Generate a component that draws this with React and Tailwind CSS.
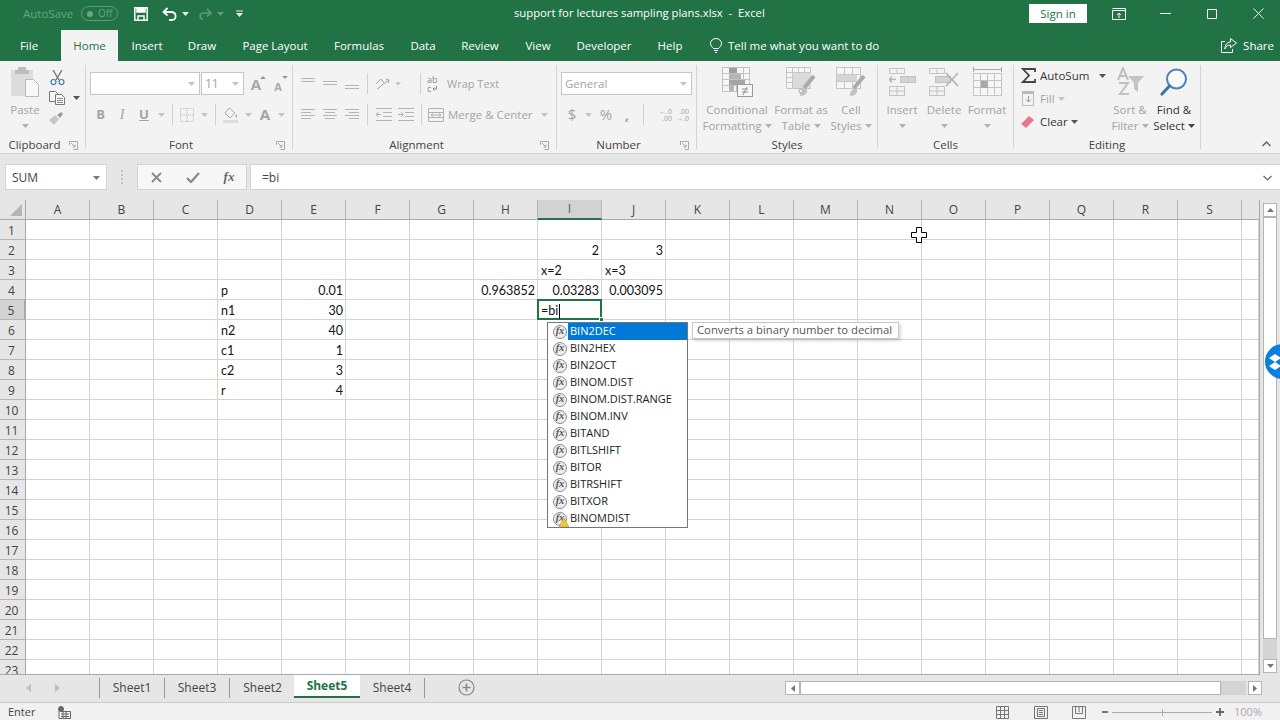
const UI = "font-['Open_Sans',sans-serif]";
const COLS = ["A", "B", "C", "D", "E", "F", "G", "H", "I", "J", "K", "L", "M", "N", "O", "P", "Q", "R", "S"];
const ROWS = Array.from({ length: 23 }, (_, i) => i + 1);
const TABS = [
  ["File", "w-[61px] pr-[3px]"],
  ["Home", "w-[57px]"],
  ["Insert", "w-[58px]"],
  ["Draw", "w-[52px]"],
  ["Page Layout", "w-[94px]"],
  ["Formulas", "w-[74px]"],
  ["Data", "w-[54px]"],
  ["Review", "w-[60px]"],
  ["View", "w-[56px]"],
  ["Developer", "w-[76px]"],
  ["Help", "w-[56px]"],
];
const CELLS = {
  I2: ["2", "r"],
  J2: ["3", "r"],
  I3: ["x=2"],
  J3: ["x=3"],
  D4: ["p"],
  E4: ["0.01", "r"],
  H4: ["0.963852", "r"],
  I4: ["0.03283", "r"],
  J4: ["0.003095", "r"],
  D5: ["n1"],
  E5: ["30", "r"],
  D6: ["n2"],
  E6: ["40", "r"],
  D7: ["c1"],
  E7: ["1", "r"],
  D8: ["c2"],
  E8: ["3", "r"],
  D9: ["r"],
  E9: ["4", "r"],
};
const FUNCS = ["BIN2DEC", "BIN2HEX", "BIN2OCT", "BINOM.DIST", "BINOM.DIST.RANGE", "BINOM.INV", "BITAND", "BITLSHIFT", "BITOR", "BITRSHIFT", "BITXOR", "BINOMDIST"];

const G = "#b4b4b4";

function Caret({ color = "#a6a6a6", className = "" }) {
  return (
    <svg width="7" height="4" viewBox="0 0 7 4" className={className}>
      <path d="M0 0h7L3.500 4z" fill={color} />
    </svg>
  );
}

function Slot({ w, children, className = "" }) {
  return <div className={`flex h-full shrink-0 items-center justify-center ${w} ${className}`}>{children}</div>;
}

function Sep() {
  return <div className="h-[21px] w-px bg-[#d0d0d0]" />;
}

function Launcher() {
  return (
    <svg width="9" height="9" viewBox="0 0 9 9" fill="none" stroke="#a8a8a8">
      <path d="M.5 4V.5H8.500V8.500H4.500" />
      <path d="M2 2l4 4M6 3.500V6H3.500" />
    </svg>
  );
}

function Group({ w, label, launcher, children }) {
  return (
    <>
      <div className={`flex h-full shrink-0 flex-col ${w}`}>
        <div className="h-[76px] shrink-0">{children}</div>
        <div className="flex h-[16px] items-center">
          <div className="flex-1 text-center text-[11.5px] text-[#444]">{label}</div>
          {launcher && (
            <div className="flex w-[16px] justify-start">
              <Launcher />
            </div>
          )}
        </div>
      </div>
      <div className="mb-[4px] mt-[4px] w-px shrink-0 bg-[#d5d5d5]" />
    </>
  );
}

function BigBtn({ w, icon, l1, l2, caret, dark, className = "" }) {
  const c = dark ? "text-[#333]" : "text-[#a3a3a3]";
  return (
    <div className={`flex shrink-0 flex-col items-center whitespace-nowrap text-[11.5px] leading-[16px] ${c} ${w} ${className}`}>
      <div className="flex h-[41px] items-center">{icon}</div>
      <div>{l1}</div>
      <div className="flex h-[16px] items-center gap-[3px]">
        {l2}
        {caret && <Caret color={dark ? "#444" : "#b0b0b0"} />}
      </div>
    </div>
  );
}

function Lines({ kind }) {
  const sets = {
    left: [[0, 14], [0, 10], [0, 14], [0, 10]],
    center: [[0, 14], [2, 12], [0, 14], [2, 12]],
    right: [[0, 14], [4, 14], [0, 14], [4, 14]],
  };
  return (
    <svg width="14" height="11" viewBox="0 0 14 11" stroke={G}>
      {sets[kind].map(([a, b], i) => (
        <path key={i} d={`M${a} ${i * 3 + 0.5}H${b}`} />
      ))}
    </svg>
  );
}

function VAlign({ at }) {
  return (
    <svg width="14" height="14" viewBox="0 0 14 14" stroke={G}>
      {[0, 3].map((d) => (
        <path key={d} d={`M0 ${at + d + 0.5}H14`} />
      ))}
    </svg>
  );
}

function Indent({ flip }) {
  return (
    <svg width="16" height="13" viewBox="0 0 16 13" fill="none" stroke={G}>
      <path d="M0 .5H16M7 4.500H16M7 8.500H16M0 12.500H16" />
      <path d={flip ? "M0 6.500H5M3 4l2.500 2.500L3 9" : "M5 6.500H0M2.500 4L0 6.500 2.500 9"} stroke="#9bb4cc" />
    </svg>
  );
}

function PasteIcon() {
  return (
    <svg width="30" height="32" viewBox="0 0 30 32">
      <rect x="1" y="4" width="22" height="26" fill="#dcdcdc" />
      <rect x="8" y="1" width="8" height="5" fill="#bdbdbd" />
      <rect x="5" y="4" width="14" height="4" fill="#bdbdbd" />
      <path d="M15.500 13.500h8l5 5v12h-13z" fill="#f8f8f8" stroke="#b9b9b9" />
    </svg>
  );
}

function Scissors() {
  return (
    <svg width="15" height="15" viewBox="0 0 15 15" fill="none">
      <path d="M3 0l6 10M12 0L6 10" stroke="#777" strokeWidth="1.400" />
      <circle cx="3.500" cy="12" r="2.500" stroke="#3f7ab8" strokeWidth="1.200" />
      <circle cx="11.500" cy="12" r="2.500" stroke="#3f7ab8" strokeWidth="1.200" />
    </svg>
  );
}

function CopyIcon() {
  return (
    <svg width="16" height="14" viewBox="0 0 16 14" fill="#f5f5f5" stroke="#777">
      <path d="M.5.500h6l2 2v8h-8z" />
      <path d="M6.500 3.500h6l3 3v7h-9z" />
      <path d="M8 7.500h6M8 9.500h6M8 11.500h6" strokeWidth=".8" />
    </svg>
  );
}

function BrushIcon() {
  return (
    <svg width="16" height="14" viewBox="0 0 16 14">
      <path d="M0 9l6-5 4 4-5 6z" fill="#c8c8c8" />
      <path d="M8 4l4-3 2 2-3 4z" fill="#9d9d9d" />
    </svg>
  );
}

function GrowA({ small }) {
  return (
    <div className="relative flex h-[16px] w-[16px] items-end justify-center">
      <span className={`font-bold leading-none text-[#a8a8a8] ${small ? "text-[11px]" : "text-[15px]"}`}>A</span>
      <svg width="6" height="3" viewBox="0 0 6 3" className="absolute right-[-2px] top-0">
        <path d={small ? "M0 0h6L3 3z" : "M0 3h6L3 0z"} fill="#999" />
      </svg>
    </div>
  );
}

function BordersIcon() {
  return (
    <svg width="14" height="14" viewBox="0 0 14 14" fill="none" stroke="#bbb" strokeDasharray="1 1">
      <rect x=".5" y=".5" width="13" height="13" />
      <path d="M7 0v14M0 7h14" />
    </svg>
  );
}

function FillIcon() {
  return (
    <svg width="16" height="16" viewBox="0 0 16 16">
      <path d="M6 1l6 5-5 5-5-5z" fill="#f4f4f4" stroke="#aaa" />
      <path d="M13 7c1.500 2 1.500 3 .5 3.500S12 9 13 7z" fill="#aaa" />
      <rect y="13" width="15" height="3" fill="#dddddd" />
    </svg>
  );
}

function CondIcon() {
  return (
    <svg width="31" height="30" viewBox="0 0 31 30" fill="none" stroke="#c2c2c2">
      <rect x=".5" y=".5" width="27" height="24" fill="#f6f6f6" />
      <path d="M0 6.500h28M0 12.500h28M0 18.500h28M7.500 0v25M14.500 0v25M21.500 0v25" />
      <rect x="7" y="1" width="8" height="5" fill="#9d9d9d" stroke="none" />
      <rect x="7" y="7" width="12" height="5" fill="#b5b5b5" stroke="none" />
      <rect x="7" y="13" width="16" height="5" fill="#a5a5a5" stroke="none" />
      <rect x="7" y="19" width="5" height="5" fill="#b5b5b5" stroke="none" />
      <rect x="15.500" y="17.500" width="15" height="12" fill="#f7f7f7" stroke="#9b9b9b" />
      <path d="M20 22h6M20 25h6M25 20l-4 8" stroke="#8f8f8f" />
    </svg>
  );
}

function TableIcon() {
  return (
    <svg width="30" height="29" viewBox="0 0 30 29" fill="none" stroke="#c6c6c6">
      <rect x=".5" y=".5" width="24" height="21" fill="#f6f6f6" />
      <path d="M0 5.500h25M0 10.500h25M0 15.500h25M6.500 0v22M12.500 0v22M18.500 0v22" />
      <rect x="7" y="6" width="18" height="15" fill="#dadada" stroke="none" />
      <path d="M28 9L18 21" stroke="#aaa" strokeWidth="4" />
      <path d="M14 29c0-6 3-8 7-7 1 4-2 7-7 7z" fill="#c2c2c2" stroke="none" />
      <circle cx="15" cy="24" r="2" fill="#f3f3f3" stroke="#aaa" />
    </svg>
  );
}

function CellStylesIcon() {
  return (
    <svg width="30" height="29" viewBox="0 0 30 29" fill="none" stroke="#c6c6c6">
      <rect x=".5" y=".5" width="24" height="21" fill="#f6f6f6" />
      <path d="M0 7.500h25M0 14.500h25M8.500 0v22M16.500 0v22" />
      <rect x="1" y="8" width="20" height="6" fill="#d6d6d6" stroke="none" />
      <path d="M28 9L18 21" stroke="#aaa" strokeWidth="4" />
      <path d="M14 29c0-6 3-8 7-7 1 4-2 7-7 7z" fill="#c2c2c2" stroke="none" />
    </svg>
  );
}

function InsertIcon() {
  return (
    <svg width="27" height="28" viewBox="0 0 27 28" fill="none" stroke="#c2c2c2">
      <path d="M.5.500h15v5h-15zM8 .5v5M.5 18.500h15v9h-15zM8 18v10M0 23h16" />
      <rect x="11.500" y="8.500" width="15" height="6" fill="#d4d4d4" />
      <path d="M19 8v7" />
      <path d="M0 11.500h7M3 8.500l-3 3 3 3" stroke="#b5b5b5" strokeWidth="1.500" />
    </svg>
  );
}

function DeleteIcon() {
  return (
    <svg width="30" height="28" viewBox="0 0 30 28" fill="none" stroke="#c2c2c2">
      <path d="M.5.500h15v5h-15zM8 .5v5M.5 18.500h15v9h-15zM8 18v10M0 23h16" />
      <rect x="6.500" y="8.500" width="15" height="6" fill="#d4d4d4" />
      <path d="M17 5l12 13M29 5L17 18" stroke="#b4b4b4" strokeWidth="1.800" />
    </svg>
  );
}

function FormatIcon() {
  return (
    <svg width="29" height="30" viewBox="0 0 29 30" fill="none" stroke="#c4c4c4">
      <path d="M.5 0v5M28.500 0v5M1 2.500h27" stroke="#a9a9a9" />
      <rect x=".5" y="6.500" width="28" height="22" fill="#f6f6f6" />
      <path d="M0 13.500h29M0 20.500h29M7.500 6v23M14.500 6v23M21.500 6v23" />
      <rect x="8" y="14" width="7" height="7" fill="#a8a8a8" stroke="none" />
    </svg>
  );
}

function SortIcon() {
  return (
    <svg width="30" height="29" viewBox="0 0 30 29">
      <path d="M3 13L8 1l5 12M5 9h6" fill="none" stroke="#c0c0c0" strokeWidth="2" />
      <path d="M4 16h9L5 27h9" fill="none" stroke="#c0c0c0" strokeWidth="2" />
      <path d="M13 9h16l-6 7v9l-4-3v-6z" fill="#c4c4c4" />
    </svg>
  );
}

function FindIcon() {
  return (
    <svg width="28" height="28" viewBox="0 0 28 28" fill="none">
      <circle cx="16.500" cy="11" r="9.500" stroke="#4f81b5" strokeWidth="2" fill="#f8f8f8" />
      <path d="M9.500 18L2 26" stroke="#3f75ad" strokeWidth="3.200" strokeLinecap="round" />
    </svg>
  );
}

function FuncBadge({ warn }) {
  return (
    <div className="relative flex h-[14px] w-[14px] shrink-0 items-center justify-center rounded-full border border-[#8a8a8a] bg-[#eeeeee] font-['Liberation_Serif',serif] text-[10.5px] font-bold italic leading-none text-[#555]">
      fx
      {warn && (
        <svg width="10" height="9" viewBox="0 0 10 9" className="absolute bottom-[-2px] right-[-3px]">
          <path d="M5 0l5 9H0z" fill="#f3c63f" stroke="#b58c1a" strokeWidth=".5" />
        </svg>
      )}
    </div>
  );
}

function TitleBar() {
  return (
    <div className="flex h-[30px] items-center pb-[3px] text-white">
      <div className="flex w-[514px] shrink-0 items-center">
        <span className="ml-[23px] w-[50px] text-[11.5px] text-[#6aa386]">AutoSave</span>
        <div className="ml-[8px] flex h-[15px] w-[37px] items-center rounded-full border border-[#5f9b7d] pl-[5px] text-[10px] text-[#6aa386]">
          <span className="h-[6px] w-[6px] rounded-full bg-[#6aa386]" />
          <span className="ml-[5px]">Off</span>
        </div>
        <svg width="14" height="14" viewBox="0 0 14 14" className="ml-[16px]" fill="none" stroke="#fff" strokeWidth="1.500">
          <path d="M.8.800h12.400v12.400H.8z" />
          <path d="M3 1v4h8V1" fill="#fff" />
          <path d="M4 13V9h6v4" />
        </svg>
        <svg width="16" height="14" viewBox="0 0 16 14" className="ml-[14px]" fill="none" stroke="#fff" strokeWidth="1.800">
          <path d="M5.500 1L1.500 5l4 3.500" />
          <path d="M2 5h7c6 0 6 8 1 8H7" />
        </svg>
        <Caret color="#e8f0ec" className="ml-[4px]" />
        <svg width="14" height="12" viewBox="0 0 14 12" className="ml-[9px]" fill="none" stroke="#5f9b7d" strokeWidth="1.600">
          <path d="M9 1l4 4-4 3.500" />
          <path d="M13 5H6c-5 0-5 6-1 6" />
        </svg>
        <Caret color="#5f9b7d" className="ml-[5px]" />
        <svg width="7" height="7" viewBox="0 0 7 7" className="ml-[12px]">
          <path d="M0 .5h7V1.500H0zM0 3h7L3.500 7z" fill="#e8f0ec" />
        </svg>
      </div>
      <span className="whitespace-pre text-[11.25px]">support for lectures sampling plans.xlsx  -  Excel</span>
      <div className="ml-auto flex items-center">
        <div className="flex h-[19px] w-[58px] items-center justify-center bg-white text-[11.5px] text-[#217346]">Sign in</div>
        <svg width="14" height="12" viewBox="0 0 14 12" className="ml-[25px]" fill="none" stroke="#fff">
          <path d="M.5 2.500h13v9H.5zM.5.500h13v2M7 10V5M5 7l2-2 2 2" />
        </svg>
        <svg width="11" height="1" viewBox="0 0 11 1" className="ml-[34px]">
          <path d="M0 .5h11" stroke="#fff" />
        </svg>
        <svg width="10" height="10" viewBox="0 0 10 10" className="ml-[36px]" fill="none" stroke="#fff">
          <path d="M.5.500h9v9h-9z" />
        </svg>
        <svg width="11" height="11" viewBox="0 0 11 11" className="ml-[36px] mr-[16px]" fill="none" stroke="#fff">
          <path d="M.5.500l10 10M10.500.500l-10 10" />
        </svg>
      </div>
    </div>
  );
}

function TabBar() {
  return (
    <div className="flex h-[31px] items-stretch text-[11.5px] text-white">
      {TABS.map(([name, w]) => (
        <div
          key={name}
          className={`flex shrink-0 items-center justify-center ${w} ${name === "Home" ? "bg-[#f3f3f3] text-[#217346]" : ""}`}
        >
          {name}
        </div>
      ))}
      <div className="ml-[12px] flex items-center">
        <svg width="12" height="15" viewBox="0 0 12 15" fill="none" stroke="#fff">
          <path d="M3.500 10.500C2 9 .5 7.500.5 5.500a5.500 5 0 0 1 11 0c0 2-1.500 3.500-3 5zM4 12.500h4M5 14.500h2" />
        </svg>
        <span className="ml-[6px]">Tell me what you want to do</span>
      </div>
      <div className="ml-auto mr-[6px] flex items-center">
        <svg width="16" height="15" viewBox="0 0 16 15" fill="none" stroke="#fff">
          <path d="M4 3.500H.5v11h11V11" />
          <path d="M9.500.5L15.500 5l-6 4.500V7C6 7 4.500 9 4 11c0-4 2-7 5.500-7z" />
        </svg>
        <span className="ml-[6px]">Share</span>
      </div>
    </div>
  );
}

function Ribbon() {
  return (
    <div className="flex h-[93px] items-stretch border-b border-[#d2d2d2] bg-[#f3f3f3] text-[#a3a3a3]">
      <Group w="w-[85px]" label="Clipboard" launcher>
        <div className="flex">
          <BigBtn w="w-[40px]" className="ml-[5px]" icon={<PasteIcon />} l1="Paste" caret />
          <div className="flex h-[66px] flex-col items-start pt-[7px]">
            <div className="flex h-[20px] w-[24px] items-center justify-center"><Scissors /></div>
            <div className="mt-[3px] flex h-[20px] items-center pl-[4px]"><CopyIcon /><Caret color="#555" className="ml-[8px]" /></div>
            <div className="mt-[2px] flex h-[20px] w-[24px] items-center justify-center"><BrushIcon /></div>
          </div>
        </div>
      </Group>

      <Group w="w-[206px]" label="Font" launcher>
        <div className="flex h-[34px] items-end pl-[4px]">
          <div className="flex h-[23px] w-[110px] items-center justify-end border border-[#c6c6c6] bg-white pr-[4px]"><Caret color="#c4c4c4" /></div>
          <div className="ml-[1px] flex h-[23px] w-[43px] items-center justify-between border border-[#c6c6c6] bg-white pl-[3px] pr-[4px] text-[12px]">11<Caret color="#c4c4c4" /></div>
          <Slot w="w-[22px] ml-[1px]" className="!h-[23px]"><GrowA /></Slot>
          <Slot w="w-[22px]" className="!h-[23px]"><GrowA small /></Slot>
        </div>
        <div className="mt-[8px] flex h-[23px] pl-[4px] text-[#a3a3a3]">
          <Slot w="w-[21px]" className="text-[13px] font-bold">B</Slot>
          <Slot w="w-[22px]" className="font-['Liberation_Serif',serif] text-[14px] italic">I</Slot>
          <Slot w="w-[22px]" className="text-[13px] font-bold underline">U</Slot>
          <Slot w="w-[12px]"><Caret color="#c4c4c4" /></Slot>
          <Slot w="w-[10px]"><Sep /></Slot>
          <Slot w="w-[20px]"><BordersIcon /></Slot>
          <Slot w="w-[14px]"><Caret color="#c4c4c4" /></Slot>
          <Slot w="w-[8px]"><Sep /></Slot>
          <Slot w="w-[24px]"><FillIcon /></Slot>
          <Slot w="w-[10px]"><Caret color="#c4c4c4" /></Slot>
          <Slot w="w-[24px]" className="text-[15px] font-bold">A</Slot>
          <Slot w="w-[8px]"><Caret color="#c4c4c4" /></Slot>
        </div>
      </Group>

      <Group w="w-[263px]" label="Alignment" launcher>
        <div className="flex h-[34px] items-end pl-[4px]">
          <Slot w="w-[22px]" className="!h-[23px]"><VAlign at={1} /></Slot>
          <Slot w="w-[22px]" className="!h-[23px]"><VAlign at={4} /></Slot>
          <Slot w="w-[22px]" className="!h-[23px]"><VAlign at={8} /></Slot>
          <Slot w="w-[8px]" className="!h-[23px]"><Sep /></Slot>
          <Slot w="w-[24px]" className="!h-[23px]">
            <svg width="16" height="14" viewBox="0 0 16 14" fill="none" stroke="#a9a9a9">
              <path d="M2 12L14 3M11 2l3 1-1 3" stroke="#8faac4" />
              <path d="M1 7l5-5 3 4" />
            </svg>
          </Slot>
          <Slot w="w-[6px]" className="!h-[23px]"><Caret color="#c4c4c4" /></Slot>
          <div className="w-[15px]" />
          <Slot w="w-[8px]" className="!h-[23px]"><Sep /></Slot>
          <div className="mb-[2px] ml-[3px] flex h-[18px] w-[14px] flex-col text-[9px] leading-[9px] text-[#8a8a8a]">
            <span>ab</span>
            <span className="flex items-center gap-[1px]">
              c
              <svg width="5" height="5" viewBox="0 0 5 5" fill="none" stroke="#8a8a8a"><path d="M4.500 0v3H1M2.500 1.500L1 3l1.500 1.500" /></svg>
            </span>
          </div>
          <span className="mb-[3px] ml-[6px] text-[11px]">Wrap Text</span>
        </div>
        <div className="mt-[8px] flex h-[23px] items-center pl-[4px]">
          <Slot w="w-[22px]"><Lines kind="left" /></Slot>
          <Slot w="w-[22px]"><Lines kind="center" /></Slot>
          <Slot w="w-[22px]"><Lines kind="right" /></Slot>
          <Slot w="w-[8px]"><Sep /></Slot>
          <Slot w="w-[23px] ml-[1px]"><Indent /></Slot>
          <Slot w="w-[22px]"><Indent flip /></Slot>
          <Slot w="w-[8px]"><Sep /></Slot>
          <Slot w="w-[18px] ml-[2px]">
            <svg width="16" height="14" viewBox="0 0 16 14" fill="none" stroke="#b0b0b0">
              <path d="M.5.500h15v13H.5zM0 4.500h16M0 9.500h16M3 7h10M5 5.500L3 7l2 1.500M11 5.500L13 7l-2 1.500" />
            </svg>
          </Slot>
          <span className="ml-[3px] w-[93px] text-[11.5px]">Merge &amp; Center</span>
          <Caret color="#c4c4c4" />
        </div>
      </Group>

      <Group w="w-[139px]" label="Number" launcher>
        <div className="flex h-[34px] items-end pl-[4px]">
          <div className="flex h-[23px] w-[131px] items-center justify-between border border-[#c6c6c6] bg-white pl-[3px] pr-[4px] text-[11.5px]">General<Caret color="#c4c4c4" /></div>
        </div>
        <div className="mt-[8px] flex h-[23px] pl-[5px]">
          <Slot w="w-[20px]" className="text-[15px]">$</Slot>
          <Slot w="w-[12px]"><Caret color="#c4c4c4" /></Slot>
          <Slot w="w-[24px]" className="text-[15px]">%</Slot>
          <Slot w="w-[18px]" className="text-[15px] font-bold">,</Slot>
          <Slot w="w-[14px]"><Sep /></Slot>
          <div className="ml-[4px] flex h-full w-[18px] shrink-0 flex-col items-end justify-center text-[7px] leading-[7px]">
            <span>←.0</span>
            <span>.00</span>
          </div>
          <div className="ml-[3px] flex h-full w-[14px] shrink-0 flex-col items-end justify-center text-[7px] leading-[7px]">
            <span>.00</span>
            <span>→.0</span>
          </div>
        </div>
      </Group>

      <Group w="w-[180px]" label="Styles">
        <div className="flex">
          <BigBtn w="w-[76px]" className="ml-[2px]" icon={<CondIcon />} l1="Conditional" l2="Formatting" caret />
          <BigBtn w="w-[52px]" icon={<TableIcon />} l1="Format as" l2="Table" caret />
          <BigBtn w="w-[48px]" icon={<CellStylesIcon />} l1="Cell" l2="Styles" caret />
        </div>
      </Group>

      <Group w="w-[135px]" label="Cells">
        <div className="flex">
          <BigBtn w="w-[42px]" className="ml-[3px]" icon={<InsertIcon />} l1="Insert" caret />
          <BigBtn w="w-[42px]" icon={<DeleteIcon />} l1="Delete" caret />
          <BigBtn w="w-[42px]" className="ml-[1px]" icon={<FormatIcon />} l1="Format" caret />
        </div>
      </Group>

      <Group w="w-[186px]" label="Editing">
        <div className="flex">
          <div className="w-[96px] shrink-0 pt-[3px] text-[11.5px]">
            <div className="flex h-[23px] items-center text-[#333]">
              <svg width="15" height="15" viewBox="0 0 15 15" className="ml-[7px] mr-[4px]" fill="none" stroke="#444" strokeWidth="1.800">
                <path d="M14 4V1H2l6 6.500L2 14h12v-3" />
              </svg>
              <span className="w-[58px]">AutoSum</span>
              <Caret color="#555" className="ml-[1px]" />
            </div>
            <div className="flex h-[23px] items-center">
              <div className="ml-[8px] mr-[6px] flex h-[15px] w-[12px] items-center justify-center border border-[#bbb] border-t-[3px]">
                <svg width="7" height="7" viewBox="0 0 7 7" fill="none" stroke="#999"><path d="M3.500 0v6M1 3.500L3.500 6 6 3.500" /></svg>
              </div>
              <span>Fill</span>
              <Caret color="#c4c4c4" className="ml-[3px]" />
            </div>
            <div className="flex h-[23px] items-center text-[#333]">
              <svg width="14" height="13" viewBox="0 0 14 13" className="ml-[7px] mr-[5px]">
                <path d="M0 9l8-8 5 4-8 8z" fill="#e8768f" />
              </svg>
              <span>Clear</span>
              <Caret color="#555" className="ml-[3px]" />
            </div>
          </div>
          <BigBtn w="w-[40px]" icon={<SortIcon />} l1="Sort &" l2="Filter" caret />
          <BigBtn w="w-[44px]" className="ml-[2px]" dark icon={<FindIcon />} l1="Find &" l2="Select" caret />
        </div>
      </Group>

      <div className="flex flex-1 items-end justify-end pb-[6px] pr-[9px]">
        <svg width="9" height="6" viewBox="0 0 9 6" fill="none" stroke="#666" strokeWidth="1.500">
          <path d="M.5 5l4-4 4 4" />
        </svg>
      </div>
    </div>
  );
}

function FormulaBar() {
  return (
    <div className="flex h-[26px] text-[12px] text-[#444]">
      <div className="ml-[5px] flex w-[102px] items-center justify-between border border-[#d4d4d4] bg-white pl-[6px] pr-[6px] pt-[1px]">
        SUM
        <Caret color="#777" />
      </div>
      <div className="flex w-[30px] flex-col items-center justify-center gap-[2px]">
        {[0, 1, 2, 3].map((i) => (
          <span key={i} className="h-[2px] w-[2px] bg-[#c4c4c4]" />
        ))}
      </div>
      <div className="flex w-[110px] items-center border border-[#d4d4d4] bg-[#f7f7f7]">
        <Slot w="w-[37px]">
          <svg width="11" height="11" viewBox="0 0 11 11" fill="none" stroke="#888" strokeWidth="1.800"><path d="M1 1l9 9M10 1l-9 9" /></svg>
        </Slot>
        <Slot w="w-[36px]">
          <svg width="14" height="11" viewBox="0 0 14 11" fill="none" stroke="#888" strokeWidth="2.200"><path d="M1 6l4 4 8-9" /></svg>
        </Slot>
        <Slot w="w-[36px]" className="font-['Liberation_Serif',serif] text-[13px] font-bold italic text-[#666]">fx</Slot>
      </div>
      <div className="ml-[3px] flex flex-1 items-center justify-between border border-r-0 border-[#d4d4d4] bg-white pl-[11px] pr-[8px] pt-[1px]">
        =bi
        <svg width="9" height="6" viewBox="0 0 9 6" fill="none" stroke="#666" strokeWidth="1.200"><path d="M.5 1l4 4 4-4" /></svg>
      </div>
    </div>
  );
}

function Cell({ id, w }) {
  const data = CELLS[id];
  const active = id === "I5";
  return (
    <div className={`relative flex shrink-0 items-center border-b border-r border-[#d4d4d4] bg-white pl-[3px] pr-[2px] pt-[4px] ${w} ${data && data[1] === "r" ? "justify-end" : ""} ${active ? "z-10" : ""}`}>
      {data && data[0]}
      {active && (
        <>
          <div className="absolute bottom-[-1px] left-[-1px] right-[-1px] top-[-1px] flex items-center border-2 border-[#217346] bg-white pl-[2px] pt-[3px]">
            =bi<span className="ml-[1px] h-[15px] w-px bg-black" />
          </div>
          <div className="absolute bottom-[-3px] right-[-3px] h-[5px] w-[5px] border border-white bg-[#217346]" />
        </>
      )}
    </div>
  );
}

function SheetGrid() {
  return (
    <div className="flex h-[474px] overflow-hidden">
      <div className="w-[1260px] shrink-0 overflow-hidden border-r border-[#a9a9a9]">
        <div className={`flex h-[20px] border-b border-[#a9a9a9] bg-[#e6e6e6] text-[12px] text-[#444] ${UI}`}>
          <div className="flex w-[26px] shrink-0 items-end justify-end border-r border-[#a9a9a9] pb-[3px] pr-[3px]">
            <svg width="12" height="12" viewBox="0 0 12 12"><path d="M12 0v12H0z" fill="#b5b5b5" /></svg>
          </div>
          {COLS.map((c) => (
            <div
              key={c}
              className={`flex w-[64px] shrink-0 items-center justify-center border-r border-[#b5b5b5] ${c === "I" ? "-mb-px h-[20px] border-b-2 border-b-[#217346] bg-[#d2d2d2] text-[#3f6b55]" : ""}`}
            >
              {c}
            </div>
          ))}
        </div>
        {ROWS.map((r) => (
          <div key={r} className="flex h-[20px] font-['Lato',sans-serif] text-[12.5px] text-[#111]">
            <div className={`flex w-[26px] shrink-0 items-center justify-center border-b border-r border-[#b5b5b5] border-r-[#a9a9a9] pr-[2px] pt-[2px] text-[12px] text-[#444] ${UI} ${r === 5 ? "border-r-2 border-r-[#217346] bg-[#d2d2d2] text-[#3f6b55]" : "bg-[#e6e6e6]"}`}>
              {r}
            </div>
            {COLS.map((c) => (
              <Cell key={c} id={`${c}${r}`} w="w-[64px]" />
            ))}
            <Cell id={`T${r}`} w="w-[17px]" />
          </div>
        ))}
      </div>
      <div className="flex w-[20px] shrink-0 flex-col bg-[#e6e6e6] pb-[1px] pl-[3px] pt-[3px]">
        <div className="flex h-[14px] w-[14px] shrink-0 items-center justify-center border border-[#b5b5b5] bg-white">
          <svg width="7" height="4" viewBox="0 0 7 4"><path d="M3.500 0L7 4H0z" fill="#777" /></svg>
        </div>
        <div className="h-[422px] w-[14px] shrink-0 border border-[#b5b5b5] bg-white" />
        <div className="w-[14px] flex-1 bg-[#d4d4d4]" />
        <div className="flex h-[14px] w-[14px] shrink-0 items-center justify-center border border-[#b5b5b5] bg-white">
          <Caret color="#777" />
        </div>
      </div>
    </div>
  );
}

function SheetTabs() {
  const tabs = ["Sheet1", "Sheet3", "Sheet2", "Sheet5", "Sheet4"];
  return (
    <div className="h-[28px] bg-[#e6e6e6]">
      <div className="h-px w-[1260px] bg-[#a9a9a9]" />
      <div className="flex text-[12px] text-[#444]">
        <div className="mt-[3px] flex h-[20px] w-[100px] shrink-0 items-center border-r border-[#9a9a9a] pl-[26px]">
          <svg width="5" height="8" viewBox="0 0 5 8"><path d="M5 0v8L0 4z" fill="#bdbdbd" /></svg>
          <svg width="5" height="8" viewBox="0 0 5 8" className="ml-[24px]"><path d="M0 0v8l5-4z" fill="#bdbdbd" /></svg>
        </div>
        {tabs.map((t) =>
          t === "Sheet5" ? (
            <div key={t} className="-ml-px flex h-[23px] w-[66px] shrink-0 items-center justify-center border-b-2 border-b-[#217346] bg-white pt-[1px] font-bold text-[#217346]">
              {t}
            </div>
          ) : (
            <div key={t} className={`mt-[3px] flex h-[20px] w-[65px] shrink-0 items-center justify-center ${t === "Sheet2" ? "" : "border-r border-[#9a9a9a]"}`}>
              {t}
            </div>
          ),
        )}
        <svg width="17" height="17" viewBox="0 0 17 17" className="ml-[33px] mt-[4px]" fill="none" stroke="#888" strokeWidth="1.200">
          <circle cx="8.500" cy="8.500" r="7.500" />
          <path d="M8.500 4.500v8M4.500 8.500h8" strokeWidth="1.600" />
        </svg>
        <div className="ml-[310px] mt-[6px] flex h-[14px] shrink-0 items-stretch">
          <div className="flex w-[15px] items-center justify-center border border-[#b5b5b5] bg-white">
            <svg width="4" height="7" viewBox="0 0 4 7"><path d="M4 0v7L0 3.500z" fill="#777" /></svg>
          </div>
          <div className="w-[421px] border border-[#b5b5b5] bg-white" />
          <div className="w-[25px] bg-[#d4d4d4]" />
          <div className="ml-[2px] flex w-[14px] items-center justify-center border border-[#b5b5b5] bg-white">
            <svg width="4" height="7" viewBox="0 0 4 7"><path d="M0 0v7l4-3.500z" fill="#777" /></svg>
          </div>
        </div>
      </div>
    </div>
  );
}

function StatusBar() {
  return (
    <div className="flex h-[18px] items-center border-t border-[#c9c9c9] bg-[#f1f1f1] pt-[1px] text-[11px] text-[#444]">
      <span className="ml-[8px]">Enter</span>
      <svg width="13" height="13" viewBox="0 0 13 13" className="ml-[23px]" fill="none" stroke="#666">
        <circle cx="3" cy="3" r="2.500" fill="#666" />
        <path d="M3.500 5.500h9v7H1V5M3 8h8M3 10.500h8M5 6v6M8 6v6" />
      </svg>
      <div className="ml-auto flex items-center">
        <svg width="13" height="13" viewBox="0 0 13 13" fill="none" stroke="#777"><path d="M.5.500h12v12H.5zM4.500 0v13M8.500 0v13M0 4.500h13M0 8.500h13" /></svg>
        <svg width="14" height="13" viewBox="0 0 14 13" className="ml-[25px]" fill="none" stroke="#777"><path d="M.5.500h13v12H.5zM3.500 2.500h7v8h-7zM5 4.500h4M5 6.500h4M5 8.500h4" /></svg>
        <svg width="14" height="13" viewBox="0 0 14 13" className="ml-[24px]" fill="none" stroke="#777"><path d="M.5.500h13v12H.5zM3.500 0v7.500h7V0M7 0v6" /></svg>
        <span className="ml-[16px] h-[2px] w-[6px] bg-[#777]" />
        <div className="relative ml-[4px] h-px w-[100px] bg-[#aaa]">
          <span className="absolute left-[50px] top-[-3px] h-[7px] w-px bg-[#aaa]" />
        </div>
        <svg width="8" height="8" viewBox="0 0 8 8" className="ml-[4px]" fill="none" stroke="#666" strokeWidth="1.800"><path d="M4 0v8M0 4h8" /></svg>
        <span className="ml-[10px] mr-[18px] text-[#aaa]">100%</span>
      </div>
    </div>
  );
}

export default function App() {
  return (
    <div className={`relative h-[720px] w-[1280px] overflow-hidden bg-[#e6e6e6] ${UI}`}>
      <div className="bg-[#217346]">
        <TitleBar />
        <TabBar />
      </div>
      <Ribbon />
      <div className="pb-[10px] pt-[10px]">
        <FormulaBar />
      </div>
      <SheetGrid />
      <SheetTabs />
      <StatusBar />

      {/* autocomplete popup and what floats over the grid */}
      <div className="absolute left-[547px] top-[322px] z-20 h-[206px] w-[141px] border border-[#767676] bg-white text-[11px] text-[#222]">
        {FUNCS.map((f, i) => (
          <div key={f} className="flex h-[17px] items-center pl-[5px]">
            <FuncBadge warn={f === "BINOMDIST"} />
            <span className={`ml-[1px] flex h-full flex-1 items-center pl-[2px] ${i === 0 ? "bg-[#0078d7] text-white" : ""}`}>{f}</span>
          </div>
        ))}
      </div>
      <div className="absolute left-[692px] top-[322px] z-20 flex h-[17px] w-[207px] items-center whitespace-nowrap border border-[#c8c8c8] bg-white pl-[4px] text-[11.3px] text-[#555] shadow-[2px_2px_3px_rgba(0,0,0,0.15)]">
        Converts a binary number to decimal
      </div>
      <div className="absolute left-[1265px] top-[344px] z-20 flex h-[35px] w-[35px] flex-col items-start justify-center rounded-full bg-[#0a7fe0] pl-[4px]">
        <svg width="12" height="16" viewBox="0 0 12 16"><path d="M6 0l6 4-6 4 6 4-6 4-6-4 6-4-6-4z" fill="#fff" /></svg>
      </div>
      <svg width="16" height="16" viewBox="0 0 16 16" className="absolute left-[911px] top-[227px] z-20">
        <path d="M5.500 .5h5v5h5v5h-5v5h-5v-5h-5v-5h5z" fill="#fff" stroke="#000" />
      </svg>
    </div>
  );
}
